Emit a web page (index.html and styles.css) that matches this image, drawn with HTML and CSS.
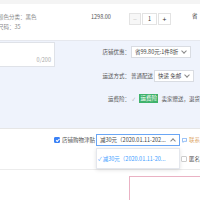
FILE: index.html
```html
<!DOCTYPE html>
<html lang="zh">
<head>
<meta charset="utf-8">
<link rel="stylesheet" href="styles.css">
</head>
<body>
<div class="topbar"></div>
<div class="item">
  <div class="attrs">
    <div>颜色分类：黑色</div>
    <div>尺码：35</div>
  </div>
  <div class="price">1298.00</div>
  <div class="stepper">
    <span class="step minus">−</span>
    <span class="step qty">1</span>
    <span class="step plus">+</span>
  </div>
  <div class="save">省</div>
</div>
<div class="extra">
  <div class="memo"><span class="count">0/200</span></div>
  <div class="opts">
    <div class="opt">
      <span class="label">店铺优惠：</span>
      <div class="select sel-shop"><span>省99.80元:1件8折</span><span class="chev"></span></div>
    </div>
    <div class="opt">
      <span class="label">运送方式：</span>
      <span class="plain">普通配送</span>
      <div class="select sel-ship"><span>快递 免邮</span><span class="chev"></span></div>
    </div>
    <div class="opt">
      <span class="label">运费险：</span>
      <span class="tick">✓</span>
      <span class="tag">运费险</span>
      <span class="note">卖家赠送，退货</span>
    </div>
  </div>
</div>
<div class="allow">
  <div class="allow-row">
    <span class="cbox on"></span>
    <span class="allow-label">店铺购物津贴</span>
    <div class="select sel-allow"><span>减30元（2020.01.11-202...</span><span class="chev up"></span>
      <div class="dropdown"><div class="option"><span class="check">✓</span>减30元（2020.01.11-20...</div></div>
    </div>
    <span class="chat"><svg viewBox="0 0 6 6" width="5" height="5"><path d="M0.5 0.5h5v3.5h-3l-1.5 1.2v-1.2h-0.5z" fill="none" stroke="#5b9cf0" stroke-width="0.8"/></svg></span>
    <span class="contact">联系卖家</span>
  </div>
  <div class="anon-row">
    <span class="cbox"></span>
    <span class="anon">匿名</span>
  </div>
</div>
<div class="bottom">
  <div class="pinkbox"></div>
</div>
</body>
</html>
```
FILE: styles.css
```css
html, body {
  margin: 0;
  padding: 0;
  background: #fff;
  overflow: hidden;
}
body {
  font-family: "Noto Sans CJK SC", "Noto Sans", sans-serif;
  font-size: 5.5px;
  color: #555;
  width: 200px;
  height: 200px;
}
.topbar {
  height: 4px;
  background: #f4f4f4;
}
.item {
  height: 36px;
  display: flex;
  align-items: flex-start;
  box-sizing: border-box;
}
.attrs {
  width: 91px;
  margin-left: -2px;
  padding-top: 8px;
  line-height: 10px;
  color: #888;
  box-sizing: border-box;
}
.price {
  width: 38px;
  margin-left: 2px;
  padding-top: 8px;
  line-height: 10px;
  color: #555;
}
.stepper {
  display: flex;
  gap: 1px;
  margin-top: 9px;
}
.step {
  height: 12px;
  box-sizing: border-box;
  border: 1px solid #e3e3e3;
  display: flex;
  align-items: center;
  justify-content: center;
  font-size: 7px;
  color: #333;
  background: #fff;
}
.minus { width: 12px; color: #ccc; background: #f7f7f7; }
.qty { width: 15px; font-size: 5.5px; }
.plus { width: 13px; }
.save {
  margin-left: 21px;
  padding-top: 7px;
  line-height: 10px;
  color: #333;
}
.extra {
  height: 88px;
  box-sizing: border-box;
  border-top: 1px solid #e6e8ee;
  background: #eff3fc;
  display: flex;
  align-items: flex-start;
}
.memo {
  margin-top: 1px;
  margin-left: -10px;
  width: 76px;
  height: 25px;
  box-sizing: border-box;
  border: 1px solid #dfe2e8;
  background: #fff;
  display: flex;
  align-items: flex-end;
  justify-content: flex-end;
  padding: 0 3px 2px 0;
}
.count { color: #aaa; line-height: 8px; }
.opts {
  margin-left: 34px;
  padding-top: 5px;
  display: flex;
  flex-direction: column;
  gap: 12px;
}
.opt {
  display: flex;
  align-items: center;
  height: 12px;
  white-space: nowrap;
}
.opt:last-child { height: 9px; }
.label {
  width: 41px;
  margin-right: 1px;
  text-align: right;
  color: #555;
}
.select {
  position: relative;
  height: 12px;
  box-sizing: border-box;
  border: 1px solid #d9dce2;
  background: #fff;
  display: flex;
  align-items: center;
  justify-content: space-between;
  padding: 0 4px 0 3px;
  color: #444;
  white-space: nowrap;
}
.sel-shop { width: 60px; }
.plain { width: 23px; flex: none; color: #555; }
.sel-ship { width: 40px; flex: none; }
.chev {
  width: 3px;
  height: 3px;
  border-right: 0.8px solid #888;
  border-bottom: 0.8px solid #888;
  transform: translateY(-1px) rotate(45deg);
}
.chev.up { transform: translateY(1px) rotate(-135deg); }
.tick {
  flex: none;
  width: 8px;
  color: #999;
  font-size: 4.5px;
  padding-left: 1px;
  box-sizing: border-box;
}
.tag {
  background: #3fb26b;
  color: #fff;
  height: 9px;
  line-height: 9px;
  padding: 0 1.5px;
}
.note { margin-left: 3px; color: #555; white-space: nowrap; }
.allow {
  height: 42px;
  box-sizing: border-box;
  border-top: 1px solid #e6e6e6;
  border-bottom: 1px solid #ececec;
  padding-top: 5px;
}
.allow-row {
  display: flex;
  align-items: center;
  height: 12px;
  padding-left: 54px;
  white-space: nowrap;
}
.cbox {
  flex: none;
  width: 6px;
  height: 6px;
  box-sizing: border-box;
  border: 0.8px solid #ccc;
  border-radius: 1px;
  background: #fff;
  position: relative;
}
.cbox.on {
  background: #3b82f6;
  border-color: #3b82f6;
}
.cbox.on::after {
  content: "";
  position: absolute;
  left: 1.6px;
  top: 0.4px;
  width: 1.2px;
  height: 2.6px;
  border-right: 0.8px solid #fff;
  border-bottom: 0.8px solid #fff;
  transform: rotate(45deg);
}
.allow-label { width: 34px; flex: none; margin-left: 2px; color: #555; }
.sel-allow {
  flex: none;
  width: 84px;
  border-color: #6aa6f5;
  padding-left: 3px;
}
.dropdown {
  position: absolute;
  left: -1px;
  top: 13px;
  width: 84px;
  height: 21px;
  box-sizing: border-box;
  border: 1px solid #e4e7ed;
  background: #fff;
  box-shadow: 0 1px 4px rgba(0,0,0,0.12);
  display: flex;
  align-items: center;
}
.option {
  color: #409eff;
  padding-left: 1px;
  white-space: nowrap;
}
.check { margin-right: 1px; }
.chat { margin-left: 2px; display: flex; flex: none; }
.contact { margin-left: 2px; color: #e0aa6e; }
.anon-row {
  display: flex;
  align-items: center;
  margin-top: 9px;
  padding-left: 181px;
  white-space: nowrap;
}
.anon { margin-left: 2px; color: #555; }
.bottom {
  padding: 6px 0 0 129px;
}
.pinkbox {
  width: 80px;
  height: 40px;
  box-sizing: border-box;
  border: 1px solid #eab2c4;
}
```
